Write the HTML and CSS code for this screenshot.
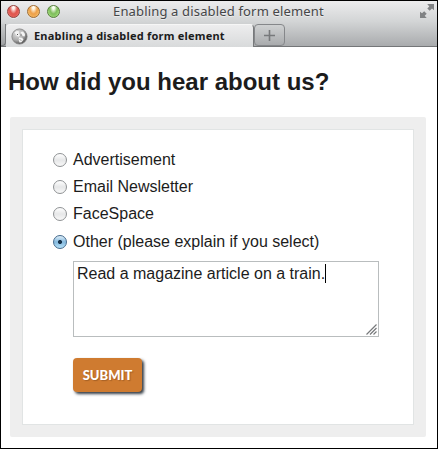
FILE: index.html
```html
<!DOCTYPE html>
<html lang="en">
<head>
<meta charset="utf-8">
<title>Enabling a disabled form element</title>
<link rel="stylesheet" href="styles.css">
</head>
<body>
<div class="window">
  <header class="chrome">
    <div class="titlebar">
      <div class="lights"><i class="light red"></i><i class="light amber"></i><i class="light green"></i></div>
      <div class="window-title">Enabling a disabled form element</div>
      <svg class="fullscreen" width="15" height="15" viewBox="0 0 15 15" fill="#808284"><path d="M7.200 0H14v6.200l-2-1.700-2.300 2.300-2.400-2.400 2-2zM0 7.800l2 1.500 2.200-2.100L6.700 9.700l-2 2L6.700 14H0z"/></svg>
    </div>
    <div class="tabs">
      <div class="tab-edge"></div>
      <div class="tab">
        <svg class="favicon" width="17" height="17" viewBox="0 0 17 17">
          <defs><radialGradient id="globe" cx=".35" cy=".3" r=".75"><stop offset="0" stop-color="#e2e2e2"/><stop offset=".6" stop-color="#aaa"/><stop offset="1" stop-color="#4c4c4c"/></radialGradient></defs>
          <circle cx="8.5" cy="8.5" r="7.6" fill="url(#globe)" stroke="#808080" stroke-width=".8"/>
          <path d="M3.500 4.200 6 3l2.200.6-.7 2L9 7.200l-1.500 1.500-1.500-.6-1.500-2zM9.500 4l2.500-.5 2 2.500-.3 2.500-2-.4-1.200-2zM8 9.500l3 .2 1.500 1.800-2 2.700-2 .3-.8-2.500z" fill="#f4f4f4"/>
          <path d="m6 6 1 1M10 6.500v1M9 11.500l1 1" stroke="#555" stroke-width="1"/>
        </svg>
        <span class="tab-title">Enabling a disabled form element</span>
      </div>
      <div class="new-tab"><svg width="11" height="11" viewBox="0 0 11 11"><path d="M5.500 0v11M0 5.500h11" stroke="#77797b" stroke-width="1.600"/></svg></div>
    </div>
  </header>
  <main class="page">
    <h1 class="heading">How did you hear about us?</h1>
    <form class="panel">
      <div class="sheet">
        <label class="option"><input type="radio" name="source" class="radio"><span>Advertisement</span></label>
        <label class="option"><input type="radio" name="source" class="radio"><span>Email Newsletter</span></label>
        <label class="option"><input type="radio" name="source" class="radio"><span>FaceSpace</span></label>
        <label class="option"><input type="radio" name="source" class="radio" checked><span>Other (please explain if you select)</span></label>
        <div class="answer">
          <span class="answer-text">Read a magazine article on a train.</span><i class="caret"></i>
          <svg class="grip" width="11" height="11" viewBox="0 0 11 11"><path d="M.5 10.500l10-10M4 10.500 10.500 4M7.500 10.500l3-3" stroke="#77797b" stroke-width="1.200"/></svg>
        </div>
        <button type="button" class="submit">SUBMIT</button>
      </div>
    </form>
  </main>
</div>
</body>
</html>
```
FILE: styles.css
```css
* { box-sizing: border-box; }
body { margin: 0; background: #fff; }
.window {
  width: 438px;
  height: 449px;
  border: 1px solid #000;
  overflow: hidden;
  font-family: "Liberation Sans", Arial, sans-serif;
  color: #1c1c1c;
}
.chrome {
  height: 46px;
  background: linear-gradient(#ececed, #d3d5d6 45%, #a9abad);
  border-bottom: 1px solid #747678;
}
.titlebar { position: relative; height: 23px; display: flex; }
.lights { display: flex; gap: 7px; padding: 4px 0 0 6px; width: 112px; }
.light {
  width: 13px;
  height: 13px;
  border-radius: 50%;
  border: 1px solid #777;
  box-shadow: 0 1px 0 rgba(255,255,255,.5);
}
.red { border-color: #94433f; background: radial-gradient(ellipse at 50% 12%, #fff5f2 0 12%, #e0574f 48%, #e35b54 65%, #ff9b92); }
.amber { border-color: #a06c34; background: radial-gradient(ellipse at 50% 12%, #fffbed 0 12%, #eda04a 48%, #f0ab55 65%, #ffe394); }
.green { border-color: #567e3e; background: radial-gradient(ellipse at 50% 12%, #f9fff2 0 12%, #7fbd5c 48%, #8ccc68 65%, #d3f7a5); }
.window-title {
  font: 13px/20px "Noto Sans", sans-serif;
  letter-spacing: .16px;
  color: #454648;
  white-space: nowrap;
  text-shadow: 0 1px 0 rgba(255,255,255,.5);
}
.fullscreen { position: absolute; left: 419px; top: 3px; }
.tabs { display: flex; height: 23px; }
.tab-edge {
  width: 5px;
  height: 22px;
  border-right: 1px solid #77797b;
  border-bottom: 1px solid #77797b;
  border-radius: 0 0 4px 0;
  background: linear-gradient(#c9cbcc, #9fa1a3);
}
.tab {
  width: 248px;
  height: 23px;
  display: flex;
  align-items: center;
  gap: 6px;
  padding-left: 5px;
  border-top: 1px solid #f6f6f6;
  border-right: 1px solid #77797b;
  border-radius: 4px 4px 0 0;
  background: linear-gradient(#ededee, #d8dadb);
}
.favicon { flex: none; }
.tab-title {
  font: bold 11px/20px "Noto Sans", sans-serif;
  letter-spacing: .21px;
  color: #1c1c1c;
  white-space: nowrap;
}
.new-tab {
  width: 31px;
  height: 22px;
  display: flex;
  align-items: center;
  justify-content: center;
  border: 1px solid #85878a;
  border-radius: 4px;
  background: linear-gradient(#cfd1d2, #a9abad);
}
.heading {
  margin: 0;
  padding: 19px 0 0 7px;
  font-size: 24px;
  line-height: 32px;
  white-space: nowrap;
}
.panel {
  width: 416px;
  height: 320px;
  margin: 19px 0 0 9px;
  padding: 12px;
  border-radius: 2px;
  background: #eee;
}
.sheet {
  width: 392px;
  height: 296px;
  border: 1px solid #e1e4e4;
  background: #fff;
  padding: 16px 0 0 30px;
}
.option {
  display: flex;
  align-items: center;
  gap: 6px;
  height: 27.3px;
  font-size: 16px;
  white-space: nowrap;
}
.radio {
  appearance: none;
  flex: none;
  width: 14px;
  height: 14px;
  margin: 0;
  border: 1px solid #8f9294;
  border-radius: 50%;
  background: linear-gradient(#fff, #e6e7e8 50%, #f8f8f8);
}
.radio:checked {
  border-color: #44698c;
  background: radial-gradient(circle, #17334c 0 1.8px, transparent 2.3px), linear-gradient(#e0f0fa, #83b8dd 50%, #b5e1f8);
}
.answer {
  position: relative;
  display: flex;
  width: 306px;
  height: 76px;
  margin: 6px 0 0 20px;
  padding: 2px 3px;
  border: 1px solid #b9bdbe;
}
.answer-text { font-size: 16px; line-height: 19px; white-space: nowrap; }
.caret { width: 1px; height: 19px; background: #000; }
.grip { position: absolute; right: 1px; bottom: 1px; }
.submit {
  display: block;
  width: 69px;
  height: 34px;
  margin: 21px 0 0 20px;
  padding: 0;
  border: 0;
  border-radius: 4px;
  background: #cf7b30;
  color: #fff;
  font: 900 13px/34px Lato, sans-serif;
  text-shadow: 1px 1px 1px rgba(90,50,20,.35);
  box-shadow: 2px 2px 3px #333b44;
}
```
